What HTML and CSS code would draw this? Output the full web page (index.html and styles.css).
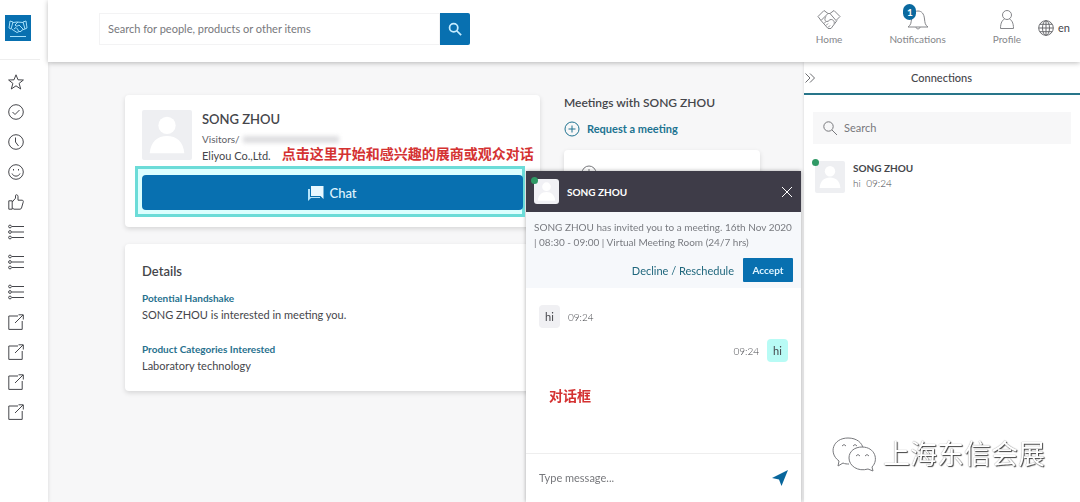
FILE: index.html
```
<!DOCTYPE html>
<html lang="en">
<head>
  <meta charset="UTF-8">
  <meta name="viewport" content="width=device-width, initial-scale=1.0">
  <title>SONG ZHOU – Profile</title>
  <link rel="stylesheet" href="styles.css">
</head>
<body>
  <!-- Shared icons -->
  <svg class="sprite" aria-hidden="true">
    <symbol id="i-list" viewBox="0 0 16 16"><circle cx="2" cy="2.5" r="1.4"/><circle cx="2" cy="8" r="1.4"/><circle cx="2" cy="13.5" r="1.4"/><path d="M4 2.5h12M4 8h12M4 13.5h12"/></symbol>
    <symbol id="i-link" viewBox="0 0 16 16"><path d="M10 2H.8v13.4h13.4V7M7 9l8-8M10.5.8h4.8v4.7"/></symbol>
    <symbol id="i-search" viewBox="0 0 16 16"><circle cx="6.5" cy="6.5" r="4.7"/><path d="M10 10l5 5"/></symbol>
    <symbol id="i-plus" viewBox="0 0 16 16"><circle cx="8" cy="8" r="7"/><path d="M8 4.5v7M4.5 8h7"/></symbol>
    <symbol id="i-user" viewBox="0 0 52 52"><circle cx="26" cy="16" r="9"/><path d="M8 45c1-12 8-18 18-18s17 6 18 18z"/></symbol>
  </svg>

  <div class="layout">
    <nav class="sidebar" aria-label="Shortcuts">
      <a class="logo" href="#" aria-label="Start">
        <svg viewBox="0 0 20 13"><path d="M2 1l3 1-2 7-2-1zM18 1l-3 1 2 7 2-1zM5 2.5l4-.5 6 .5M10 2L7 5c1 2 3 1 4 0l4 4M3.5 9L9 12.5l2-1 2 0 1-1.5 3-1M6 9l2-1.5L9.5 9l1 2"/></svg>
        <span></span>
      </a>
      <div class="shortcuts">
        <a href="#" aria-label="Favourites"><svg viewBox="0 0 16 16"><path d="M8 .8l2 5 5.4.2-4.3 3.4 1.6 5.6L8 11.8 3.3 15l1.6-5.6L.6 6l5.4-.2z"/></svg></a>
        <a href="#" aria-label="Accepted"><svg viewBox="0 0 16 16"><circle cx="8" cy="8" r="7.3"/><path d="M4.5 8L7 10.5 11.5 6"/></svg></a>
        <a href="#" aria-label="Pending"><svg viewBox="0 0 16 16"><circle cx="8" cy="8" r="7.3"/><path d="M7.5 3.5V8l3 4"/></svg></a>
        <a href="#" aria-label="Recommended"><svg viewBox="0 0 16 16"><circle cx="8" cy="8" r="7.3"/><path d="M4 9.5c1.5 3.5 6.5 3.5 8 0M5.5 5v1.5M10.5 5v1.5"/></svg></a>
        <a href="#" aria-label="Interested"><svg viewBox="0 0 16 16"><path d="M.8 6.8h3.4v8.4H.8zM4.2 8l3.3-3.8V1.5C7.5.4 10 .4 10 2.5v3.7h4c1.2 0 1.6 1 1.2 2l-1.7 5.8c-.3.8-.8 1.2-1.5 1.2H6L4.2 14"/></svg></a>
        <a href="#" aria-label="Exhibitors"><svg><use href="#i-list"/></svg></a>
        <a href="#" aria-label="Products"><svg><use href="#i-list"/></svg></a>
        <a href="#" aria-label="Visitors"><svg><use href="#i-list"/></svg></a>
        <a href="#" aria-label="Website"><svg><use href="#i-link"/></svg></a>
        <a href="#" aria-label="Programme"><svg><use href="#i-link"/></svg></a>
        <a href="#" aria-label="Press"><svg><use href="#i-link"/></svg></a>
        <a href="#" aria-label="Help"><svg><use href="#i-link"/></svg></a>
      </div>
    </nav>

    <div class="page">
      <header class="topbar">
        <form class="search">
          <input type="search" aria-label="Search the event" placeholder="Search for people, products or other items">
          <button type="button" aria-label="Search"><svg><use href="#i-search"/></svg></button>
        </form>
        <nav class="topnav" aria-label="Main">
          <a href="#"><svg viewBox="0 0 24 20"><path d="M1 7l6-6 4 3-7 7zM13 4l4-3 6 6-4 4zM11 4h2M4 11l7 8h3l6-8M9 7c-2 3-1 5 1 5 2 0 2-2 4-2 2 0 4 2 3 4M7 14l2-2M9 16l2-2M11 18l2-2"/></svg>Home</a>
          <a href="#">
            <svg viewBox="0 0 24 20"><path d="M2 17.5c3-2 3-4 3.5-8C6 4 8.5 1.5 12 1.5S18 4 18.5 9.5c.5 4 .5 6 3.5 8zM10 17.5c0 2.5 4 2.5 4 0"/></svg>Notifications
            <span class="badge">1</span>
          </a>
          <a href="#"><svg viewBox="0 0 24 20"><circle cx="12" cy="5.5" r="4.5"/><path d="M5.5 19c0-6 2-8.5 4-9.5M18.5 19c0-6-2-8.5-4-9.5M5.5 19h13"/></svg>Profile</a>
          <button type="button" class="lang"><svg viewBox="0 0 16 16"><circle cx="8" cy="8" r="7.3"/><ellipse cx="8" cy="8" rx="3.5" ry="7.3"/><path d="M8 .7v14.6M.7 8h14.6M2 4.3h12M2 11.7h12"/></svg>en</button>
        </nav>
      </header>

      <div class="body">
        <main class="content">
          <div class="cards">
            <section class="card">
              <div class="person">
                <svg class="avatar"><use href="#i-user"/></svg>
                <div class="info">
                  <h1>SONG ZHOU</h1>
                  <p class="role">Visitors/<span class="hidden-name"></span></p>
                  <p class="company">Eliyou Co.,Ltd. <strong class="note" lang="zh">点击这里开始和感兴趣的展商或观众对话</strong></p>
                </div>
              </div>
              <div class="chat-action">
                <button type="button" class="chat-btn">
                  <svg viewBox="0 0 16 16"><path class="back" d="M0 4h2v8h10v1H3l-3 3z"/><path class="front" d="M3 1h12.5v13l-3-3H3z"/></svg>Chat
                </button>
              </div>
            </section>
            <section class="card details">
              <h2>Details</h2>
              <h3>Potential Handshake</h3>
              <p>SONG ZHOU is interested in meeting you.</p>
              <h3>Product Categories Interested</h3>
              <p>Laboratory technology</p>
            </section>
          </div>
          <aside class="meetings">
            <h2>Meetings with SONG ZHOU</h2>
            <a href="#" class="request"><svg><use href="#i-plus"/></svg>Request a meeting</a>
            <div class="card meeting"><svg viewBox="0 0 16 16"><circle cx="8" cy="8" r="7"/><path d="M8 4v4l3 2"/></svg></div>
          </aside>
        </main>

        <aside class="connections">
          <div class="tab">
            <button type="button" aria-label="Collapse"><svg viewBox="0 0 12 12"><path d="M1.5 1.5L6 6l-4.5 4.5M6 1.5L10.5 6 6 10.5"/></svg></button>
            <h2>Connections</h2>
          </div>
          <label class="find"><svg><use href="#i-search"/></svg><input type="search" aria-label="Search connections" placeholder="Search"></label>
          <a href="#" class="contact">
            <span class="face"><svg class="avatar"><use href="#i-user"/></svg><i class="dot"></i></span>
            <span><b>SONG ZHOU</b><small>hi&nbsp; 09:24</small></span>
          </a>
        </aside>
      </div>
    </div>
  </div>

  <section class="chat" aria-label="Chat with SONG ZHOU">
    <header>
      <span class="face"><svg class="avatar"><use href="#i-user"/></svg><i class="dot"></i></span>
      <h2>SONG ZHOU</h2>
      <button type="button" aria-label="Close"><svg viewBox="0 0 12 12"><path d="M1 1l10 10M11 1L1 11"/></svg></button>
    </header>
    <div class="invite">
      <p>SONG ZHOU has invited you to a meeting. 16th Nov 2020 | 08:30 - 09:00 | Virtual Meeting Room (24/7 hrs)</p>
      <div class="answers">
        <a href="#">Decline / Reschedule</a>
        <button type="button">Accept</button>
      </div>
    </div>
    <div class="messages">
      <div class="msg"><span>hi</span><time>09:24</time></div>
      <div class="msg own"><span>hi</span><time>09:24</time></div>
      <strong class="note" lang="zh">对话框</strong>
    </div>
    <form class="compose">
      <input type="text" aria-label="Message" placeholder="Type message...">
      <button type="button" aria-label="Send"><svg viewBox="0 0 16 16"><path d="M16 0L0 8l7 1.5L9.5 16z"/></svg></button>
    </form>
  </section>

  <div class="watermark" lang="zh">
    <svg viewBox="0 0 44 36"><path d="M17 28c-2 0-4 0-6-1l-5 3 1-5C-4 17 1 2 16 2c9 0 14 5 15 10"/><path d="M40 31l1 4-5-2c-10 3-19-3-19-11 0-7 6-11 13-11 13 0 17 13 10 20z"/><path d="M10 10q2-3 4 0M21 10q2-3 4 0M24 20q2-3 4 0M33 20q2-3 4 0"/></svg>
    上海东信会展
  </div>
</body>
</html>
```
FILE: styles.css
```
* { box-sizing: border-box; }
body { margin: 0; font-family: Lato, "Noto Sans CJK SC", sans-serif; font-size: 11px; line-height: 16px; color: #45464b; background: #f7f7f8; }
h1, h2, h3, p { margin: 0; }
a { color: inherit; text-decoration: none; }
button { padding: 0; border: 0; background: none; color: inherit; font: inherit; cursor: pointer; }
input { min-width: 0; border: 0; outline: 0; background: none; font: inherit; }
input::placeholder { color: #77787c; opacity: 1; }
svg { display: block; flex: none; width: 16px; height: 16px; fill: none; stroke: currentColor; stroke-width: 1; }
.sprite { position: absolute; width: 0; height: 0; }

.layout { display: flex; height: 100vh; overflow: hidden; }

/* Sidebar */
.sidebar { flex: none; width: 48px; background: #fff; box-shadow: 0 0 4px #0002; }
.logo { display: flex; flex-direction: column; align-items: center; justify-content: center; gap: 3px; width: 26px; height: 26px; margin: 15px 0 18px 5px; background: #0870b0; color: #a5e0fa; }
.logo svg { width: 20px; height: 13px; }
.logo span { width: 16px; height: 1px; background: #a5e0fa; }
.shortcuts { display: flex; flex-direction: column; gap: 14px; width: 40px; padding: 14px 8px; border-top: 1px solid #eee; }

/* Top bar */
.page { flex: 1; display: flex; flex-direction: column; min-width: 0; }
.topbar { position: relative; z-index: 1; display: flex; justify-content: space-between; height: 62px; padding: 8px 10px 0 51px; background: #fff; box-shadow: 0 1px 5px #0004; }
.search { display: flex; width: 371px; height: 32px; margin-top: 5px; }
.search input { flex: 1; padding: 0 8px; border: 1px solid #f3f3f4; }
.search button { display: grid; place-items: center; width: 30px; border-radius: 0 2px 2px 0; background: #0870b0; color: #c5ecff; }
.search svg { width: 14px; height: 14px; stroke-width: 2; }
.topnav { display: flex; align-items: flex-start; gap: 47px; color: #85868a; font-size: 10px; }
.topnav a { position: relative; display: flex; flex-direction: column; align-items: center; }
.topnav a svg { width: 24px; height: 23px; }
.badge { position: absolute; top: -4px; left: 14px; width: 13px; border-radius: 7px; background: #0a699f; color: #fff; font-weight: bold; text-align: center; }
.lang { display: flex; align-items: center; gap: 4px; margin: 12px 0 0 -30px; color: #45464b; font-size: 11px; }
.lang svg { color: #6c6d71; }

/* Profile */
.body { flex: 1; display: flex; }
.content { flex: 1; display: flex; align-items: flex-start; gap: 24px; padding: 33px 44px 0 77px; min-width: 0; }
.cards { flex: 1; display: flex; flex-direction: column; gap: 17px; min-width: 0; }
.card { padding: 15px 17px 17px; border-radius: 4px; background: #fff; box-shadow: 0 2px 5px #0002; }
.person { display: flex; gap: 10px; margin-bottom: 12px; }
.avatar { width: 50px; height: 50px; border-radius: 2px; background: #eeeff2; fill: #fff; stroke: none; }
.info { padding-top: 1px; white-space: nowrap; }
h1 { font-size: 13px; line-height: 17px; font-weight: 600; }
.role { display: flex; align-items: center; gap: 3px; margin-top: 2px; font-size: 10px; line-height: 18px; color: #606166; }
.hidden-name { width: 96px; height: 7px; background: #dedee0; filter: blur(2px); }
.company { display: flex; gap: 11px; line-height: 15px; }
.note { color: #d43232; font-size: 14px; font-weight: bold; }
.company .note { line-height: 12px; }
.chat-action { position: relative; z-index: 3; }
.chat-action::before { content: ""; position: absolute; inset: -9px -2px -7px -7px; border: 3px solid #6cdcd8; background: #dcffff; }
.chat-btn { position: relative; display: flex; align-items: center; justify-content: center; gap: 5px; width: 100%; height: 35px; border-radius: 4px; background: #0870b0; color: #e0f5ff; font-size: 13px; font-weight: 500; }
.chat-btn .back, .chat-btn .front { fill: #b5e4fa; stroke: none; }
.chat-btn .front { fill: #e8f8ff; }
.details h2 { margin: 4px 0 11px; font-size: 13px; font-weight: 600; }
.details h3 { color: #28718e; font-size: 10px; font-weight: bold; }
.details p { line-height: 17px; }
.details p + h3 { margin-top: 18px; }

.meetings { flex: none; width: 196px; }
.meetings h2 { font-size: 12px; line-height: 15px; font-weight: 600; white-space: nowrap; }
.request { display: flex; align-items: center; gap: 7px; margin: 11px 0 13px; color: #207391; font-weight: bold; }
.meeting { height: 60px; color: #77787c; }

/* Connections */
.connections { flex: none; width: 276px; background: #fff; box-shadow: 0 0 3px #0002; }
.tab { display: flex; align-items: center; height: 33px; border-bottom: 2px solid #28758a; }
.tab svg { width: 12px; height: 12px; color: #6c6d71; }
.tab button { width: 12px; }
.tab h2 { flex: 1; padding-right: 13px; font-size: 11px; font-weight: 500; text-align: center; }
.find { display: flex; align-items: center; gap: 4px; height: 32px; margin: 17px 9px; padding: 0 9px; background: #f7f7f8; color: #77787c; }
.find input { flex: 1; }
.contact { display: flex; gap: 8px; padding-left: 11px; line-height: 15px; }
.contact b, .contact small { display: block; }
.contact b { font-size: 10px; }
.contact small { font-size: 10px; font-weight: 300; }
.contact .avatar { width: 30px; height: 32px; }
.face { position: relative; }
.dot { position: absolute; top: -2px; left: -3px; width: 7px; height: 7px; border-radius: 50%; background: #2f9965; }

/* Chat window */
.chat { position: fixed; top: 171px; right: 279px; bottom: 0; z-index: 2; display: flex; flex-direction: column; width: 275px; background: #fff; box-shadow: 0 0 4px #0005; }
.chat header { display: flex; align-items: center; gap: 8px; height: 41px; padding: 0 8px; background: #3e3c48; color: #fff; }
.chat header .avatar { width: 25px; height: 25px; border-radius: 3px; background: #f1f1f5; }
.chat header h2 { flex: 1; font-size: 10px; font-weight: bold; }
.chat header button svg { width: 12px; height: 12px; }
.invite { padding: 8px 8px 6px; background: #f6f8fb; color: #797b80; font-size: 10px; line-height: 15px; }
.answers { display: flex; align-items: center; justify-content: flex-end; gap: 9px; margin-top: 8px; }
.answers a { color: #20677d; font-size: 11px; }
.answers button { width: 50px; height: 24px; border-radius: 1px; background: #0870b0; color: #def4ff; font-weight: bold; }
.messages { flex: 1; padding: 17px 13px; }
.msg { display: flex; align-items: center; gap: 8px; margin-bottom: 11px; }
.msg span { width: 21px; border-radius: 4px; background: #f0f0f3; line-height: 23px; text-align: center; }
.msg time { font-size: 10px; font-weight: 300; }
.own { flex-direction: row-reverse; }
.own span { background: #b8fbf5; }
.messages .note { display: block; margin: 26px 10px 0; line-height: 16px; }
.compose { display: flex; align-items: center; height: 49px; padding: 0 13px; border-top: 1px solid #eee; }
.compose input { flex: 1; padding: 0; }
.compose svg { fill: #08669c; stroke: none; }

/* Watermark */
.watermark { position: fixed; right: 35px; bottom: 28px; z-index: 4; display: flex; align-items: center; gap: 7px; color: #fff; font-size: 27px; line-height: 40px; text-shadow: 1px 1px 1px #444, 0 0 1px #777; white-space: nowrap; pointer-events: none; }
.watermark svg { width: 44px; height: 36px; color: #77787c; fill: #fff; }

@media (max-width: 900px) {
  .meetings { display: none; }
}
```
